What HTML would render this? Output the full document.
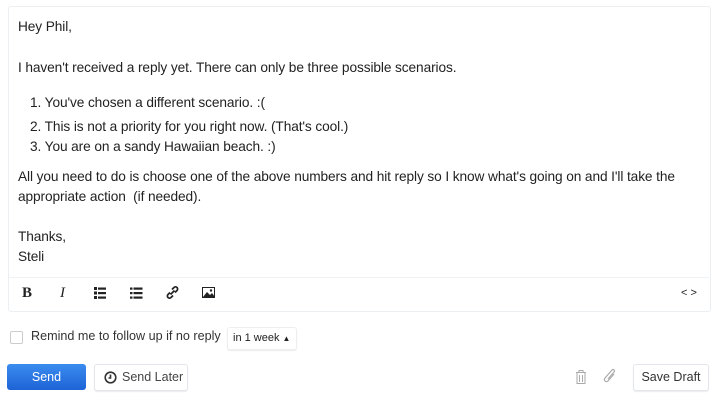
<!DOCTYPE html>
<html><head><style>
body{margin:0;width:718px;height:402px;background:#fff;font-family:"Liberation Sans",sans-serif;color:#222;position:relative;overflow:hidden}
.box{position:absolute;left:8px;top:6px;width:701px;height:304px;border:1px solid #eceff2;border-radius:3px}
.t{position:absolute;left:18px;font-size:13.7px;line-height:20px;white-space:nowrap;letter-spacing:-0.1px}
.sep{position:absolute;left:9px;width:700px;top:277px;border-top:1px solid #f0f2f4}
.ic{position:absolute;top:285px;font-size:15px;color:#222}
.btn{position:absolute;border:1px solid #e3e6ea;border-radius:3px;background:#fff;font-size:12.5px;box-shadow:0 1px 1px rgba(0,0,0,.08)}
</style></head><body>
<div class="box"></div>
<div class="t" style="top:17px">Hey Phil,</div>
<div class="t" style="top:58px">I haven't received a reply yet. There can only be three possible scenarios.</div>
<div class="t" style="top:93px;left:30px">1. You've chosen a different scenario. :(</div>
<div class="t" style="top:117px;left:30px">2. This is not a priority for you right now. (That's cool.)</div>
<div class="t" style="top:137px;left:30px">3. You are on a sandy Hawaiian beach. :)</div>
<div class="t" style="top:167px">All you need to do is choose one of the above numbers and hit reply so I know what's going on and I'll take the</div>
<div class="t" style="top:187px">appropriate action &nbsp;(if needed).</div>
<div class="t" style="top:227px">Thanks,</div>
<div class="t" style="top:247px">Steli</div>
<div class="sep"></div>
<div class="ic" style="left:22px;font-weight:bold;font-family:'Liberation Serif',serif">B</div>
<div class="ic" style="left:60px;font-style:italic;font-family:'Liberation Serif',serif">I</div>
<svg style="position:absolute;left:94px;top:287px" width="12" height="12"><g fill="#222"><rect x="0" y="0" width="3" height="3"/><rect x="0" y="4.5" width="3" height="3"/><rect x="0" y="9" width="3" height="3"/><rect x="4" y="0.5" width="8" height="2.2"/><rect x="4" y="5" width="8" height="2.2"/><rect x="4" y="9.5" width="8" height="2.2"/></g></svg>
<svg style="position:absolute;left:130px;top:287px" width="13" height="12"><g fill="#222"><rect x="0" y="0.5" width="2.5" height="2.2"/><rect x="0" y="5" width="2.5" height="2.2"/><rect x="0" y="9.5" width="2.5" height="2.2"/><rect x="3.5" y="0.5" width="9" height="2.2"/><rect x="3.5" y="5" width="9" height="2.2"/><rect x="3.5" y="9.5" width="9" height="2.2"/></g></svg>
<svg style="position:absolute;left:166px;top:286px" width="13" height="13" fill="none" stroke="#222" stroke-width="1.7"><path d="M6 3.5l2-2a2 2 0 0 1 3 3l-2 2M7 9.5l-2 2a2 2 0 0 1-3-3l2-2M4.5 8.5l4-4"/></svg>
<svg style="position:absolute;left:202px;top:287px" width="13" height="11"><rect x="0.5" y="0.5" width="12" height="10" fill="#fff" stroke="#222"/><path d="M1 10l4-5 3 3 2-2 3 4z" fill="#222"/><circle cx="9" cy="3.5" r="1.2" fill="#222"/></svg>
<div class="ic" style="left:681px;font-size:11px;top:287px">&lt; &gt;</div>
<div style="position:absolute;left:10px;top:331px;width:11px;height:11px;border:1px solid #ccc;border-radius:2px"></div>
<div style="position:absolute;left:31px;top:329px;font-size:12.6px;color:#333">Remind me to follow up if no reply</div>
<div class="btn" style="left:227px;top:327px;width:68px;height:21px;line-height:21px;font-size:11px;text-indent:5px;border-color:#eee">in 1 week <span style="font-size:8px">▲</span></div>
<div style="position:absolute;left:7px;top:364px;width:79px;height:26px;border-radius:3px;background:linear-gradient(#3b8cf0,#1d63d6);color:#fff;font-size:12.5px;text-align:center;line-height:26px">Send</div>
<div class="btn" style="left:94px;top:364px;width:92px;height:25px;line-height:25px;color:#444"><svg style="position:absolute;left:9px;top:6px" width="13" height="13" fill="none" stroke="#333" stroke-width="1.6"><circle cx="6.5" cy="6.5" r="5.3"/><path d="M6.5 3.5v3.5h-2"/></svg><span style="margin-left:27px">Send Later</span></div>
<svg style="position:absolute;left:575px;top:369px" width="12" height="16" fill="none" stroke="#aaa"><path d="M1 3.5h10M4 3.5V1.5h4v2M2 3.5v11h8v-11M4.5 6v7M7.5 6v7"/></svg>
<svg style="position:absolute;left:602px;top:368px" width="16" height="18" fill="none" stroke="#aaa" stroke-width="1.2"><path d="M12 6l-6 7a2 2 0 0 1-3-3l7-8a1.3 1.3 0 0 1 2 2l-6 7"/></svg>
<div class="btn" style="left:633px;top:364px;width:74px;height:25px;line-height:25px;text-align:center;color:#333">Save Draft</div>
</body></html>
